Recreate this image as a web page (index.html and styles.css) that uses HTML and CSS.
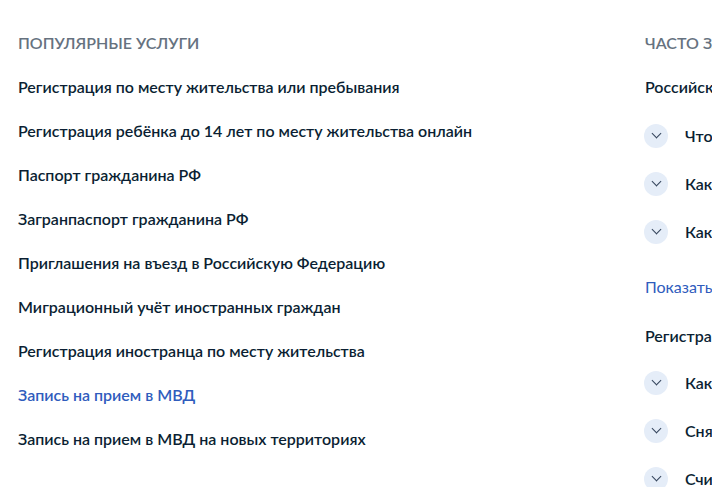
FILE: index.html
```html
<!DOCTYPE html>
<html lang="ru">
  <head>
    <meta charset="UTF-8" />
    <meta name="viewport" content="width=device-width, initial-scale=1.0" />
    <title>Услуги</title>
    <link rel="stylesheet" href="styles.css">
  </head>
  <body>
    <div class="page">

      <!-- популярные услуги -->
      <div class="popular">
        <h3 class="title">Популярные услуги</h3>
        <ul class="services">
          <li><a href="#">Регистрация по месту жительства или пребывания</a></li>
          <li><a href="#">Регистрация ребёнка до 14 лет по месту жительства онлайн</a></li>
          <li><a href="#">Паспорт гражданина РФ</a></li>
          <li><a href="#">Загранпаспорт гражданина РФ</a></li>
          <li><a href="#">Приглашения на въезд в Российскую Федерацию</a></li>
          <li><a href="#">Миграционный учёт иностранных граждан</a></li>
          <li><a href="#">Регистрация иностранца по месту жительства</a></li>
          <li><a href="#" class="active">Запись на прием в МВД</a></li>
          <li><a href="#">Запись на прием в МВД на новых территориях</a></li>
        </ul>
      </div>

      <!-- частые вопросы -->
      <div class="faq">
        <h3 class="title">Часто задаваемые вопросы</h3>

        <div class="faq-group">
          <h4 class="faq-name">Российский паспорт</h4>
          <ul class="questions">
            <li><span class="chev"></span>Что делать, если паспорт утерян или украден</li>
            <li><span class="chev"></span>Как заменить паспорт в 20 и 45 лет</li>
            <li><span class="chev"></span>Как получить паспорт впервые в 14 лет</li>
          </ul>
          <a href="#" class="more">Показать все</a>
        </div>

        <div class="faq-group second">
          <h4 class="faq-name">Регистрация по месту жительства</h4>
          <ul class="questions">
            <li><span class="chev"></span>Как зарегистрироваться по месту жительства</li>
            <li><span class="chev"></span>Снятие с регистрационного учёта</li>
            <li><span class="chev"></span>Считается ли регистрация по месту пребывания</li>
          </ul>
        </div>
      </div>

    </div>
  </body>
</html>
```

FILE: styles.css
```css
*{
    padding: 0px;
    margin: 0px;
    box-sizing: border-box;
}
body{
    font-family: Lato, "Noto Sans", sans-serif;
    background-color: #fff;
    color: #0b1f33;
    overflow: hidden;
}
.page{
    display: flex;
    width: 1100px;
    padding-top: 33px;
}
.popular{
    flex: none;
    width: 645px;
    padding-left: 18px;
}
.faq{
    flex: none;
    width: 440px;
}
.title{
    font-size: 16px;
    line-height: 20px;
    font-weight: 600;
    text-transform: uppercase;
    color: #66727f;
}
.services{
    list-style: none;
    margin-top: 12px;
}
.services li{
    padding: 10px 0;
    line-height: 24px;
}
.services li a{
    text-decoration: none;
    font-size: 16px;
    font-weight: 600;
    color: #0b1f33;
}
.services li a.active{
    color: #2f5cbd;
}

/* faq */
.faq-name{
    margin-top: 22px;
    font-size: 16px;
    line-height: 24px;
    font-weight: 600;
}
.questions{
    list-style: none;
    margin-top: 13px;
}
.questions li{
    display: flex;
    align-items: center;
    padding: 12px 0;
    line-height: 24px;
    font-size: 16px;
    font-weight: 600;
    white-space: nowrap;
}
.chev{
    flex: none;
    position: relative;
    width: 24px;
    height: 24px;
    margin-left: -1px;
    margin-right: 17px;
    border-radius: 50%;
    background-color: #e5edf8;
}
.chev::after{
    content: "";
    position: absolute;
    left: 9px;
    top: 6px;
    width: 6px;
    height: 6px;
    border-right: 1.7px solid #34445c;
    border-bottom: 1.7px solid #34445c;
    transform: rotate(45deg);
}
.more{
    display: block;
    margin-top: 19px;
    font-size: 16px;
    line-height: 24px;
    color: #2f5cbd;
    text-decoration: none;
}
.second .faq-name{
    margin-top: 25px;
}
.second .questions{
    margin-top: 11px;
}
```
